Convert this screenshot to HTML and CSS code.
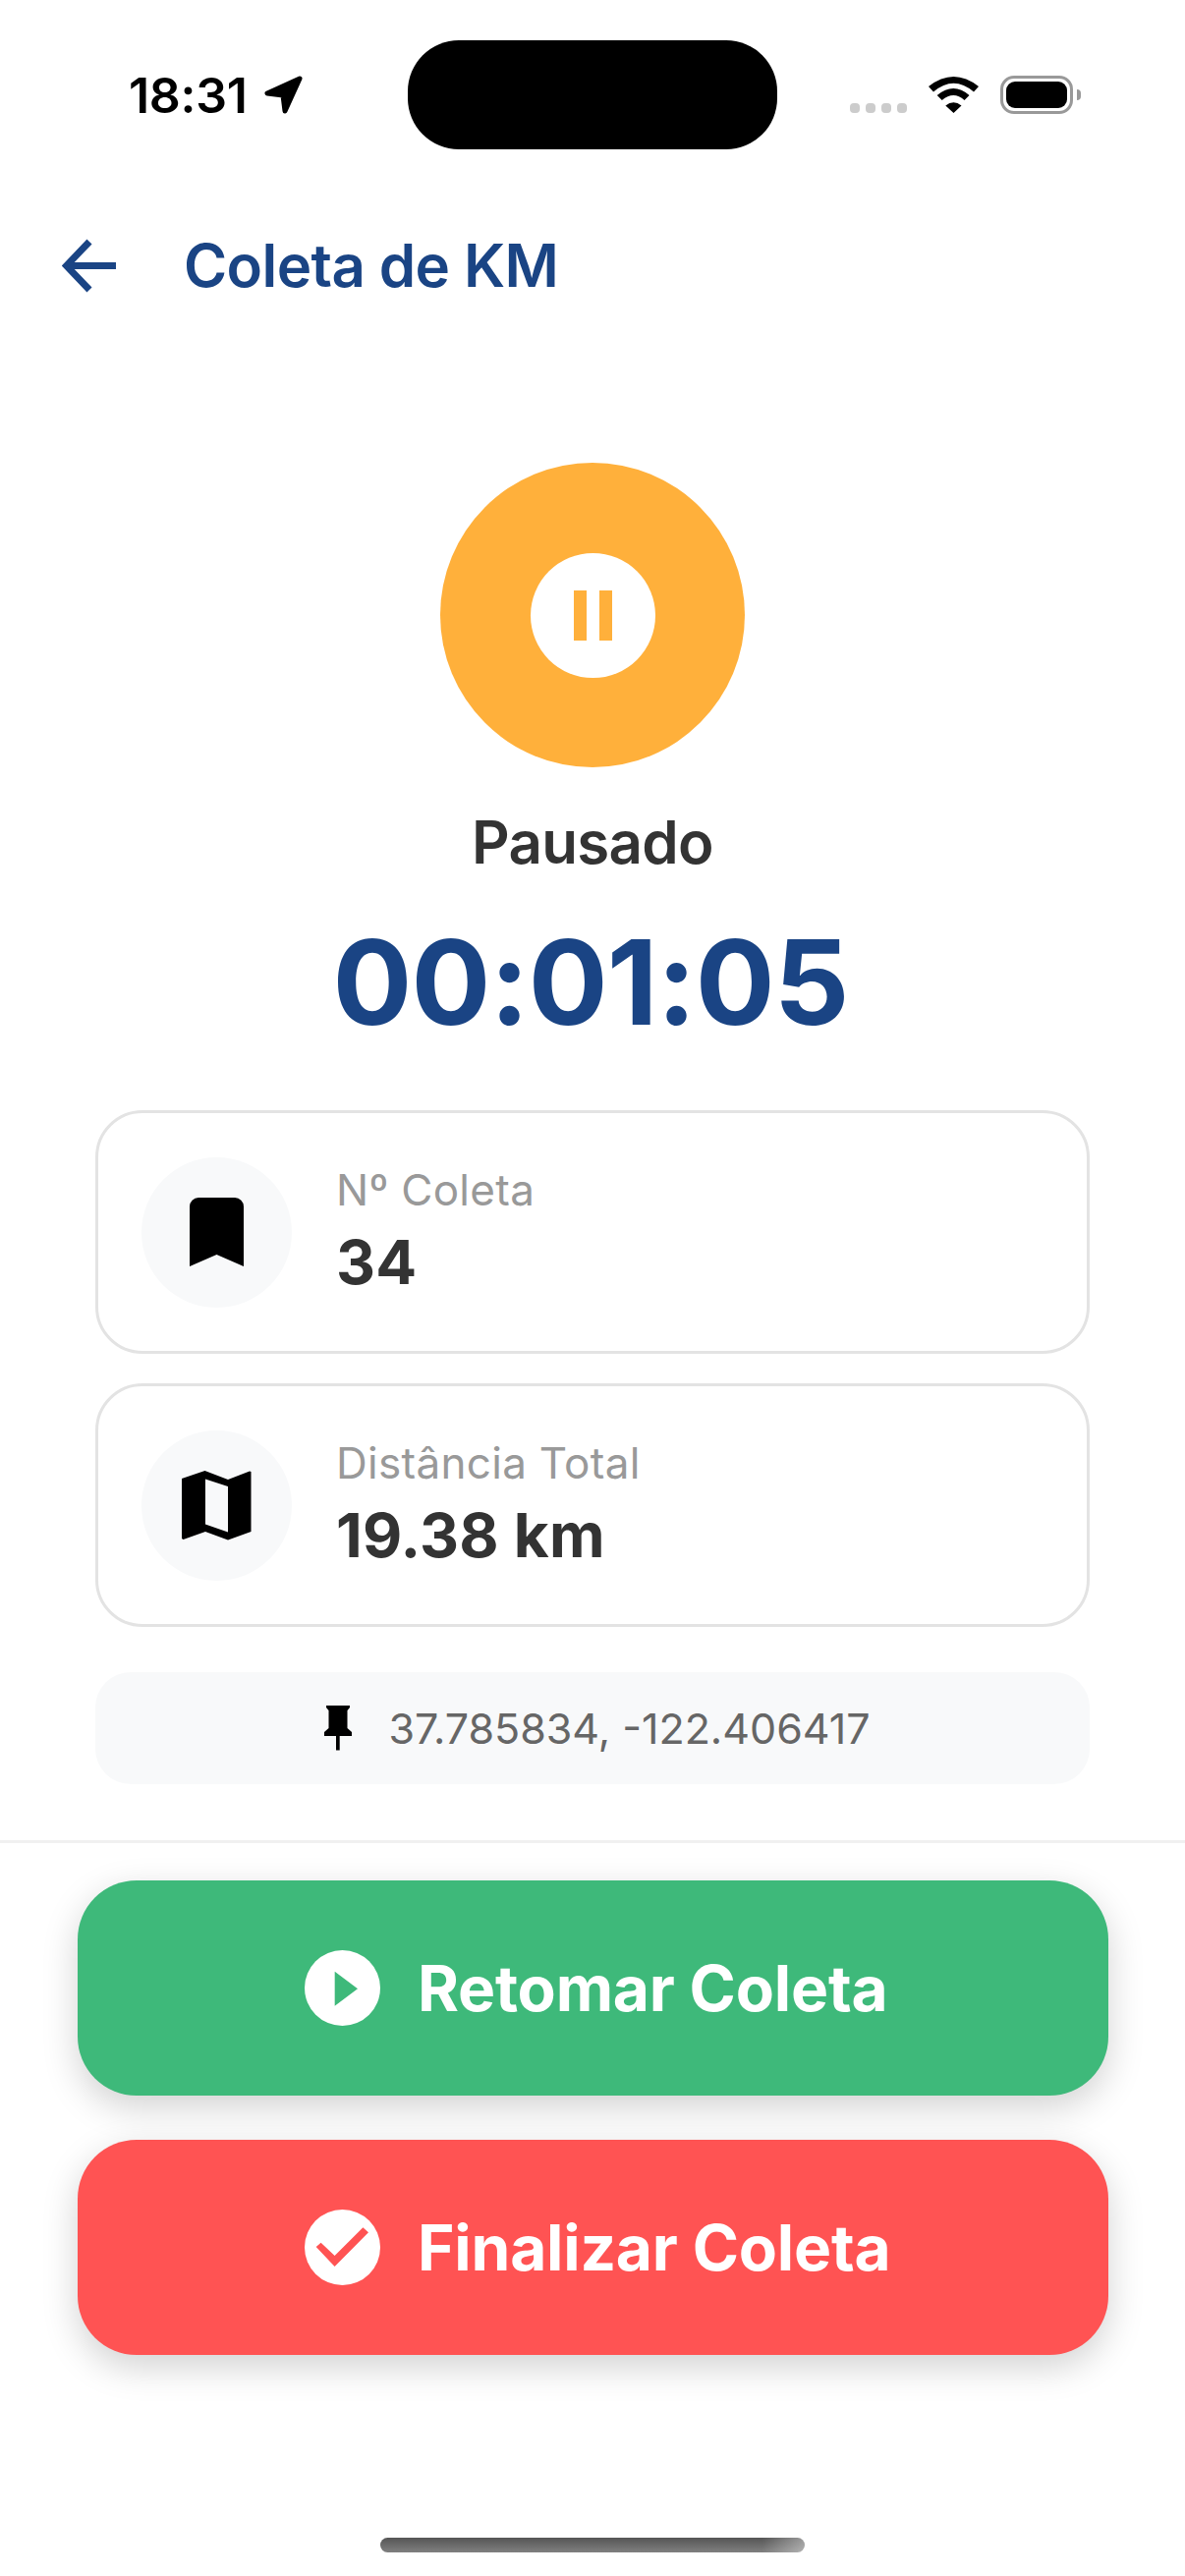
FILE: index.html
```html
<!DOCTYPE html>
<html lang="pt-BR">
<head>
    <meta charset="UTF-8">
    <meta name="viewport" content="width=device-width, initial-scale=1.0">
    <title>Coleta de KM</title>
    <link rel="stylesheet" href="styles.css">
</head>
<body>
    <div class="status-bar">
        <div class="status-left">
            <span class="status-time">18:31</span>
            <svg class="status-arrow" width="39" height="39" viewBox="0 0 39 39"><polygon points="36,3 3,18 19,20 21,36" fill="#000" stroke="#000" stroke-width="5" stroke-linejoin="round"/></svg>
        </div>
        <div class="island"></div>
        <div class="status-right">
            <div class="signal"><i></i><i></i><i></i><i></i></div>
            <svg class="wifi" width="51" height="37" viewBox="0 0 51 37"><path d="M0 10Q25.500 -10 51 10L46 15.500Q25.500 -2 5 15.500Z M8.700 19Q25.500 5 41.500 19L36.500 24Q25.500 14 13.700 24Z M17.300 29.500Q25.500 23 33.500 29.500L25.500 37Z" fill="#000"/></svg>
            <div class="battery"><div class="battery-fill"></div></div>
            <div class="battery-nub"></div>
        </div>
    </div>

    <div class="header">
        <svg width="55" height="55" viewBox="0 0 55 55"><path d="M28 3L4.500 27.500L28 52M4.500 27.500H55" fill="none" stroke="#1a4484" stroke-width="7"/></svg>
        <h1 class="title">Coleta de KM</h1>
    </div>

    <div class="content">
        <div class="status-circle">
            <div class="status-inner">
                <span class="pause-bar"></span>
                <span class="pause-bar"></span>
            </div>
        </div>
        <div class="status-text">Pausado</div>
        <div class="timer">00:01:05</div>

        <div class="card">
            <div class="card-icon">
                <svg width="55" height="70" viewBox="0 0 55 70"><path d="M0 9A9 9 0 0 1 9 0H46A9 9 0 0 1 55 9V70L27.500 58L0 70Z" fill="#000"/></svg>
            </div>
            <div class="card-text">
                <div class="card-label">Nº Coleta</div>
                <div class="card-value">34</div>
            </div>
        </div>
        <div class="card">
            <div class="card-icon">
                <svg width="71" height="71" viewBox="0 0 71 71"><path fill-rule="evenodd" d="M0 8L23.500 0L47 9L69 0.500L70.500 1V62L47 70.500L24 62L1.500 70L0 69ZM24 8.500V54.500L47 62.500V16Z" fill="#000"/></svg>
            </div>
            <div class="card-text">
                <div class="card-label">Distância Total</div>
                <div class="card-value">19.38 km</div>
            </div>
        </div>

        <div class="coords">
            <svg width="28" height="46" viewBox="0 0 28 46"><path d="M2 0H26V2L23.500 5V23L28 27V31H15.700V45.500H12V31H0V27L4.500 23V5L2 2Z" fill="#000"/></svg>
            <span>37.785834, -122.406417</span>
        </div>
    </div>

    <div class="footer">
        <button class="action action-green">
            <svg width="77" height="77" viewBox="0 0 77 77"><circle cx="38.500" cy="38.500" r="38.500" fill="#fff"/><polygon points="30.700,21.700 54,39.300 30.700,56.700" fill="#3eb97a"/></svg>
            <span>Retomar Coleta</span>
        </button>
        <button class="action action-red">
            <svg width="77" height="77" viewBox="0 0 77 77"><circle cx="38.500" cy="38.500" r="38.500" fill="#fff"/><polygon points="11.700,38 16.600,33.700 30.600,47 59.400,18.300 65,23.300 30.600,58" fill="#ff5353"/></svg>
            <span>Finalizar Coleta</span>
        </button>
    </div>

    <div class="home-bar"></div>
</body>
</html>
```

FILE: styles.css
```css
* {
  box-sizing: border-box;
}
html, body {
  margin: 0;
  padding: 0;
}
body {
  width: 1206px;
  height: 2622px;
  overflow: hidden;
  background: #fff;
  font-family: Inter, "Liberation Sans", sans-serif;
  color: #333;
}

/* status bar */
.status-bar {
  height: 152px;
  padding: 41px 0 0 131px;
  display: flex;
  align-items: center;
}
.status-left {
  display: flex;
  align-items: center;
  width: 284px;
  gap: 17px;
}
.status-time {
  font-size: 50px;
  font-weight: 600;
  line-height: 40px;
  letter-spacing: -0.3px;
  color: #000;
}
.island {
  width: 376px;
  height: 111px;
  border-radius: 52px;
  background: #000;
}
.status-right {
  display: flex;
  align-items: center;
  margin-left: 74px;
  height: 39px;
}
.signal {
  display: flex;
  gap: 6px;
  align-self: flex-end;
  margin-bottom: 1px;
}
.signal i {
  display: block;
  width: 10px;
  height: 10px;
  border-radius: 4px;
  background: #ccc;
}
.wifi {
  margin-left: 22px;
}
.battery {
  width: 74px;
  height: 39px;
  margin-left: 22px;
  padding: 3px;
  border: 3px solid #999;
  border-radius: 14px;
}
.battery-fill {
  height: 100%;
  border-radius: 9px;
  background: #000;
}
.battery-nub {
  width: 4px;
  height: 11px;
  margin-left: 4px;
  border-radius: 0 4px 4px 0;
  background: #999;
}

/* header */
.header {
  height: 236px;
  padding-left: 63px;
  display: flex;
  align-items: center;
  gap: 69px;
}
.title {
  margin: 0;
  font-size: 60px;
  font-weight: 600;
  letter-spacing: -0.6px;
  color: #1a4484;
}

/* main */
.content {
  height: 1485px;
  padding-top: 83px;
  display: flex;
  flex-direction: column;
  align-items: center;
}
.status-circle {
  width: 310px;
  height: 310px;
  border-radius: 50%;
  background: #ffb03b;
  display: flex;
  align-items: center;
  justify-content: center;
}
.status-inner {
  width: 127px;
  height: 127px;
  border-radius: 50%;
  background: #fff;
  display: flex;
  align-items: center;
  justify-content: center;
  gap: 13px;
}
.pause-bar {
  width: 13px;
  height: 51px;
  background: #ffb03b;
}
.status-text {
  margin-top: 40px;
  font-size: 60px;
  line-height: 72px;
  font-weight: 600;
  letter-spacing: -0.7px;
}
.timer {
  margin-top: 35px;
  margin-right: 4px;
  font-size: 120px;
  line-height: 144px;
  font-weight: 700;
  letter-spacing: -0.9px;
  color: #1a4484;
}
.card {
  width: 1012px;
  height: 248px;
  margin-bottom: 30px;
  padding-left: 44px;
  border: 3px solid #e3e3e3;
  border-radius: 48px;
  display: flex;
  align-items: center;
  gap: 45px;
}
.timer + .card {
  margin-top: 58px;
}
.card-icon {
  width: 153px;
  height: 153px;
  border-radius: 50%;
  background: #f8f9fa;
  display: flex;
  align-items: center;
  justify-content: center;
}
.card-text {
  padding-bottom: 4px;
}
.card-label {
  font-size: 44px;
  line-height: 50px;
  letter-spacing: 0.3px;
  color: #999;
}
.card-value {
  margin-top: 16px;
  font-size: 62px;
  line-height: 66px;
  font-weight: 700;
  letter-spacing: 0.2px;
}
.coords {
  width: 1012px;
  height: 114px;
  margin-top: 16px;
  padding-left: 10px;
  border-radius: 36px;
  background: #f8f9fa;
  display: flex;
  align-items: center;
  justify-content: center;
  gap: 37px;
  font-size: 43px;
  color: #666;
}

/* footer */
.footer {
  border-top: 3px solid #f0f0f0;
  padding: 38px 78px 0 79px;
  display: flex;
  flex-direction: column;
  gap: 45px;
}
.action {
  height: 219px;
  border: none;
  border-radius: 60px;
  box-shadow: 0 12px 36px rgba(0, 0, 0, 0.18);
  display: flex;
  align-items: center;
  justify-content: flex-start;
  padding-left: 231px;
  gap: 38px;
  font-family: inherit;
  font-size: 64px;
  font-weight: 700;
  letter-spacing: -0.2px;
  color: #fff;
}
.action-green {
  background: #3eb97a;
}
.action-red {
  background: #ff5353;
}
.home-bar {
  width: 432px;
  height: 15px;
  margin: 186px 0 0 387px;
  border-radius: 8px;
  background: linear-gradient(90deg, transparent 90%, rgba(255, 255, 255, 0.4)), linear-gradient(#555, #808080);
}
```
